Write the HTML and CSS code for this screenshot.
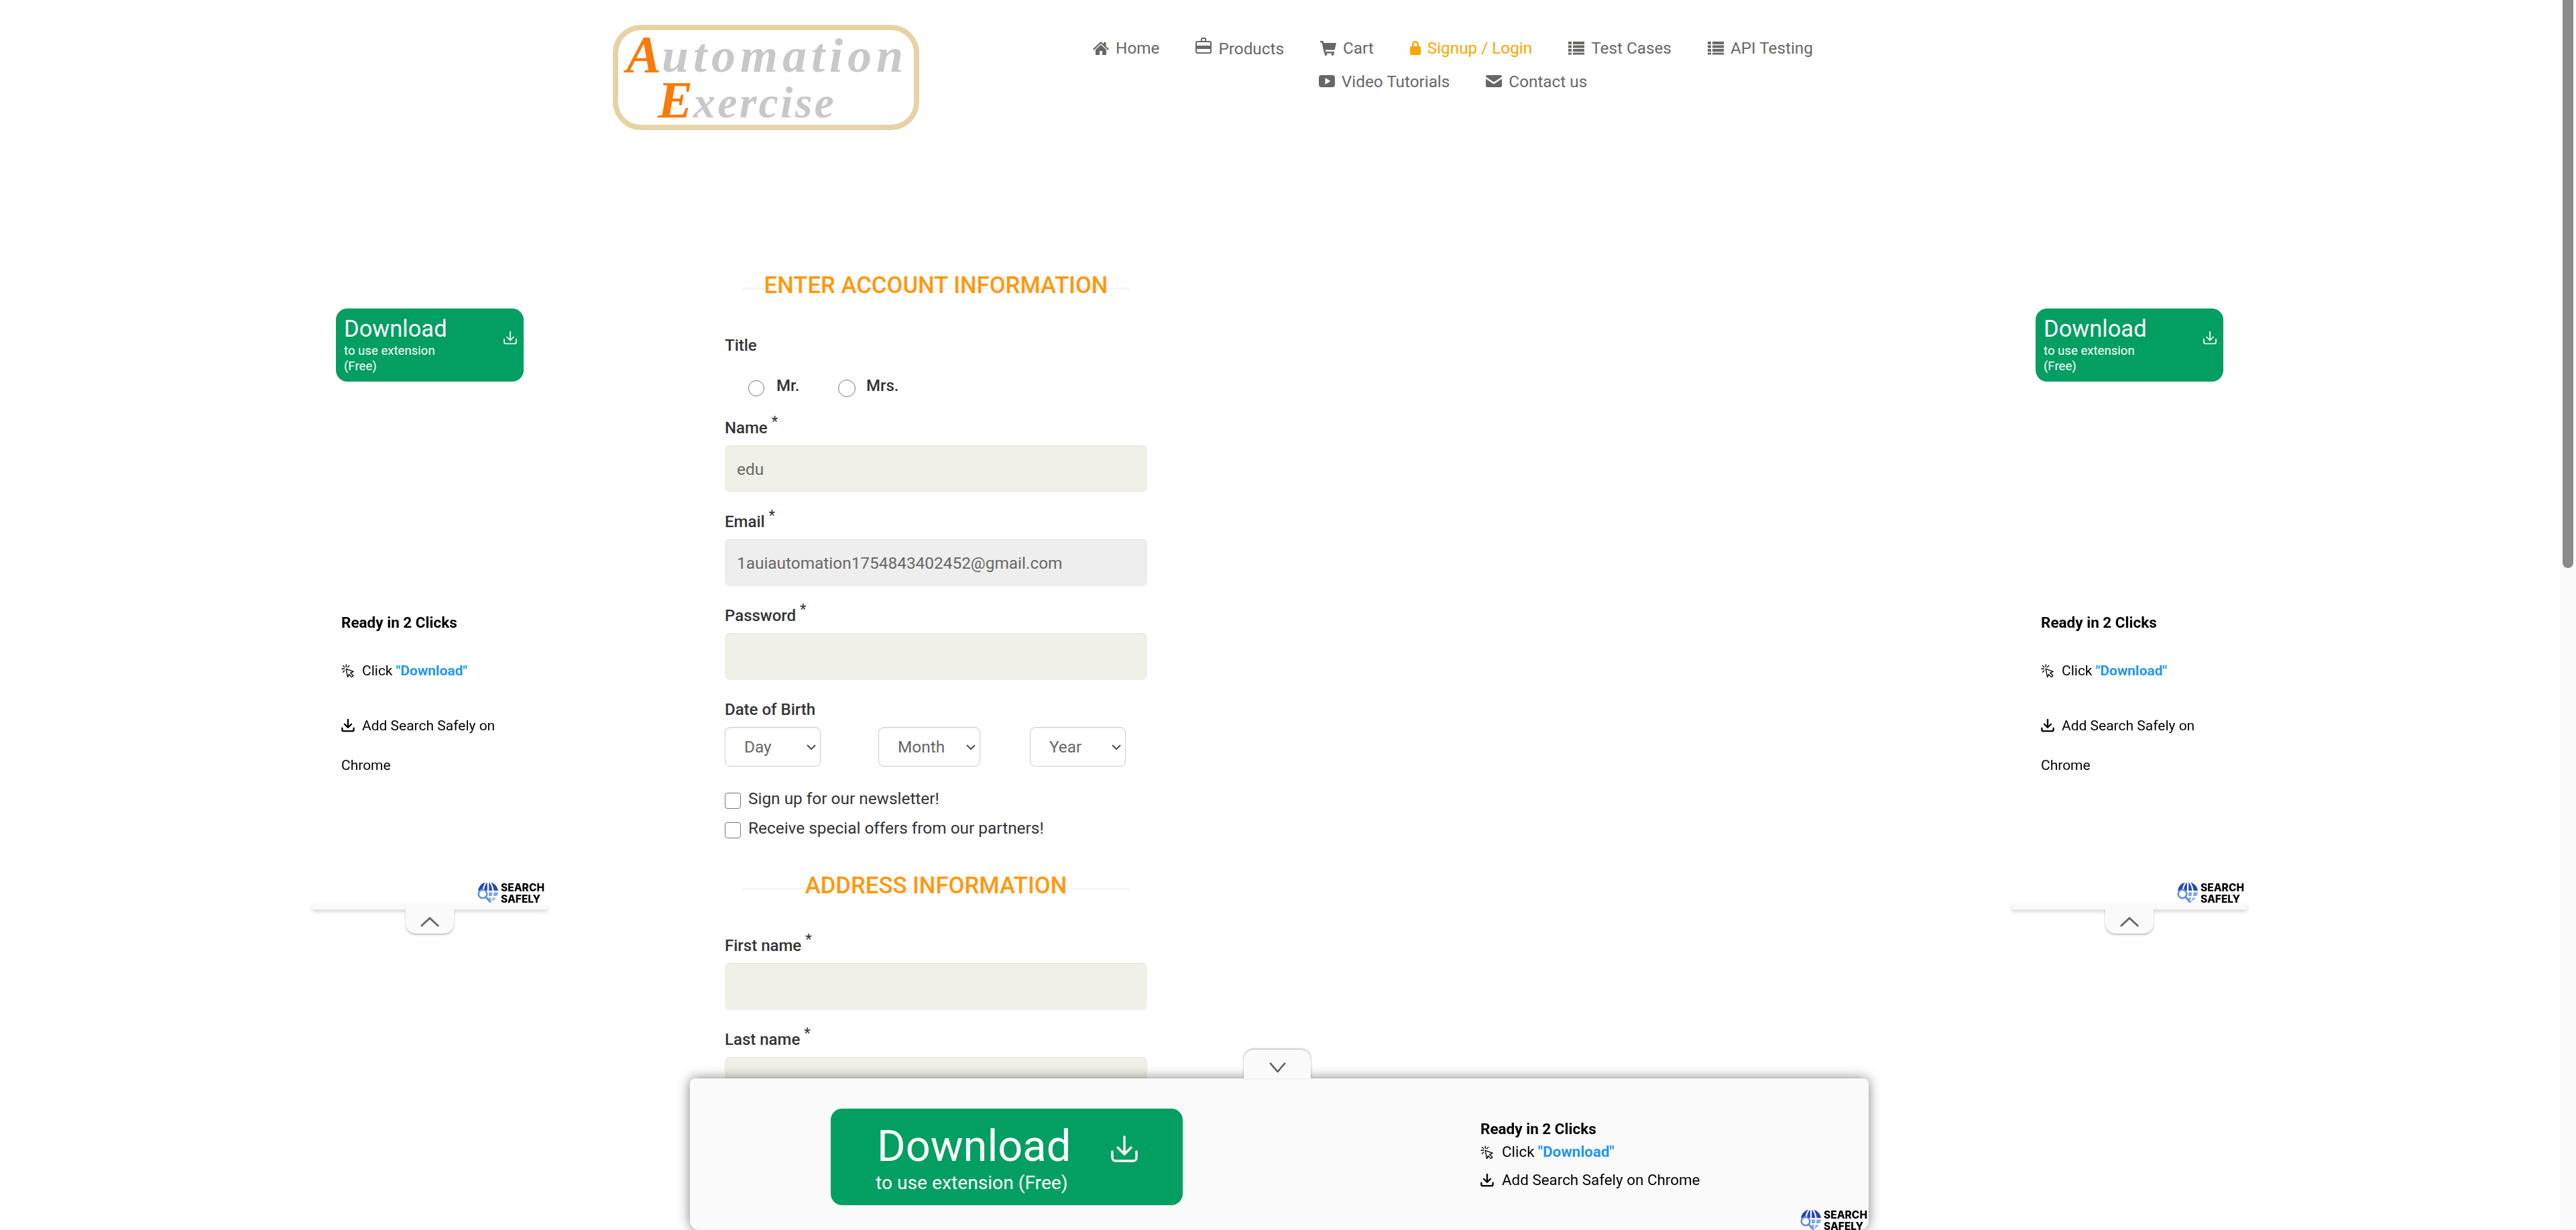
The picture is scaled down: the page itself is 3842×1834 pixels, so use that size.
FILE: index.html
```html
<!DOCTYPE html>
<html lang="en">

<head>
    <meta charset="UTF-8">
    <meta name="viewport" content="width=device-width, initial-scale=1.0">
    <title>Automation Exercise - Signup</title>
    <link rel="stylesheet" href="styles.css">
</head>

<body>
    <svg class="icon-defs" width="0" height="0">
        <symbol id="i-save" viewBox="0 0 40 40">
            <path d="M20 2v25M10 18l10 10 10-10M2 24v9a5 5 0 0 0 5 5h26a5 5 0 0 0 5-5v-9" fill="none" stroke="currentColor" stroke-width="3.4" stroke-linecap="round" stroke-linejoin="round"/>
        </symbol>
        <symbol id="i-click" viewBox="0 0 22 22">
            <path d="M8 8l12 4.6-5 2 4.6 4.6-2.4 2.4-4.6-4.6-2 5z" fill="none" stroke="currentColor" stroke-width="1.5" stroke-linejoin="round"/>
            <path d="M8 1v4M1 8h4M2.6 2.6l2.6 2.6M13 2.6l-2.4 2.6M2.6 13.4l2.6-2.4" fill="none" stroke="currentColor" stroke-width="1.5" stroke-linecap="round"/>
        </symbol>
        <symbol id="i-get" viewBox="0 0 22 22">
            <path d="M11 1v12M5.5 8.5L11 14l5.5-5.500M1.500 15v2.500a2.500 2.500 0 0 0 2.500 2.500h14a2.500 2.500 0 0 0 2.500-2.500V15" fill="none" stroke="currentColor" stroke-width="2.600" stroke-linecap="round" stroke-linejoin="round"/>
        </symbol>
        <symbol id="i-globe" viewBox="0 0 32 31">
            <path d="M1 13C2 7 6 2 12 .7 9.500 4 8 8 7.500 13zM9.800 13c.4-5 2-9.500 5-12.500V13zM17.200 13V.5c3 3 4.600 7.500 5 12.500zM24.500 13c-.5-5-2-9-4.500-12.300C26 2 30 7 31 13z" fill="#2547b5"/>
            <path d="M17 15.500h5.200c0 2-.3 3.700-.6 5.500H17zM24.500 15.500H31c-.3 2-1 3.800-2 5.500h-5.100c.4-1.800.6-3.500.6-5.500zM17 23.500h4c-.7 2.400-2 4.600-4 6.500zM23.300 23.500h4.100c-1.800 2.700-4.400 4.900-7.500 6 1.500-1.700 2.600-3.800 3.400-6z" fill="#7fa3ea"/>
            <circle cx="8" cy="18" r="6.300" fill="#fff" stroke="#5f8fe3" stroke-width="2.600"/>
            <path d="M12.500 22.500L19 29.500" stroke="#5f8fe3" stroke-width="3" stroke-linecap="round"/>
        </symbol>
    </svg>

    <header class="site-header">
        <a class="logo" href="#">
            <span class="logo-line"><b>A</b>utomation</span>
            <span class="logo-line logo-line-2"><b>E</b>xercise</span>
        </a>
        <ul class="nav">
            <li><a href="#"><svg class="nav-icon" viewBox="0 0 24 24"><path d="M12 3L0 14l1.500 1.700L12 6l10.500 9.700L24 14l-4.500-4.100V4h-3.500v2.700zM4 15v8h6v-6h4v6h6v-8l-8-7.300z"/></svg>Home</a></li>
            <li class="nav-products"><a href="#"><svg class="nav-icon nav-icon-bag" viewBox="0 0 24 24"><path fill-rule="evenodd" d="M8 5V2a2 2 0 0 1 2-2h4a2 2 0 0 1 2 2v3h5a3 3 0 0 1 3 3v13a3 3 0 0 1-3 3H3a3 3 0 0 1-3-3V8a3 3 0 0 1 3-3zm2-3v3h4V2zM2 8v4h20V8a1 1 0 0 0-1-1H3a1 1 0 0 0-1 1zm0 9v4a1 1 0 0 0 1 1h18a1 1 0 0 0 1-1v-4z"/></svg>Products</a></li>
            <li><a href="#"><svg class="nav-icon" viewBox="0 0 24 24"><path d="M0 2h4.500l.7 3H24l-2.500 10.500H7.600l.5 2.500H21v2.500H6l-3.500-16H0z"/><circle cx="8.500" cy="22" r="2"/><circle cx="18.500" cy="22" r="2"/></svg>Cart</a></li>
            <li class="active"><a href="#"><svg class="nav-icon nav-icon-lock" viewBox="0 0 16 24"><path fill-rule="evenodd" d="M3 10V7a5 5 0 0 1 10 0v3h1.500A1.500 1.500 0 0 1 16 11.500v10a1.500 1.500 0 0 1-1.500 1.500h-13A1.500 1.500 0 0 1 0 21.500v-10A1.500 1.500 0 0 1 1.500 10zm2.500 0h5V7a2.500 2.500 0 0 0-5 0z"/></svg>Signup / Login</a></li>
            <li><a href="#"><svg class="nav-icon" viewBox="0 0 24 24"><path d="M0 3h5v4H0zM7 3h17v4H7zM0 8.500h5v4H0zM7 8.500h17v4H7zM0 14h5v4H0zM7 14h17v4H7zM0 19.500h5v3H0zM7 19.500h17v3H7z"/></svg>Test Cases</a></li>
            <li><a href="#"><svg class="nav-icon" viewBox="0 0 24 24"><path d="M0 3h5v4H0zM7 3h17v4H7zM0 8.500h5v4H0zM7 8.500h17v4H7zM0 14h5v4H0zM7 14h17v4H7zM0 19.500h5v3H0zM7 19.500h17v3H7z"/></svg>API Testing</a></li>
            <li><a href="#"><svg class="nav-icon" viewBox="0 0 24 24"><path fill-rule="evenodd" d="M4 3h16a4 4 0 0 1 4 4v10a4 4 0 0 1-4 4H4a4 4 0 0 1-4-4V7a4 4 0 0 1 4-4zm5.500 4v10l8-5z"/></svg>Video Tutorials</a></li>
            <li><a href="#"><svg class="nav-icon" viewBox="0 0 24 24"><path d="M2 3h20a2 2 0 0 1 2 2v.6l-12 8-12-8V5a2 2 0 0 1 2-2zM0 8.500l12 8 12-8V19a2 2 0 0 1-2 2H2a2 2 0 0 1-2-2z"/></svg>Contact us</a></li>
        </ul>
    </header>

    <main class="signup-form">
        <h2 class="form-title">ENTER ACCOUNT INFORMATION</h2>

        <div class="field">
            <label class="field-label">Title</label>
            <div class="radio-row">
                <label class="radio"><input type="radio" name="title"><span>Mr.</span></label>
                <label class="radio radio-mrs"><input type="radio" name="title"><span>Mrs.</span></label>
            </div>
        </div>

        <div class="field">
            <label class="field-label">Name <sup>*</sup></label>
            <input class="text-input" type="text" value="edu">
        </div>

        <div class="field">
            <label class="field-label">Email <sup>*</sup></label>
            <input class="text-input" type="text" value="1auiautomation1754843402452@gmail.com" disabled>
        </div>

        <div class="field">
            <label class="field-label">Password <sup>*</sup></label>
            <input class="text-input" type="password">
        </div>

        <div class="field">
            <label class="field-label">Date of Birth</label>
            <div class="dob">
                <div class="select-box day"><select><option>Day</option></select><svg viewBox="0 0 14 10"><path d="M1 2l6 6 6-6"/></svg></div>
                <div class="select-box month"><select><option>Month</option></select><svg viewBox="0 0 14 10"><path d="M1 2l6 6 6-6"/></svg></div>
                <div class="select-box year"><select><option>Year</option></select><svg viewBox="0 0 14 10"><path d="M1 2l6 6 6-6"/></svg></div>
            </div>
        </div>

        <div class="field checks">
            <label class="check"><input type="checkbox"><span>Sign up for our newsletter!</span></label>
            <label class="check"><input type="checkbox"><span>Receive special offers from our partners!</span></label>
        </div>

        <h2 class="form-title address-title">ADDRESS INFORMATION</h2>

        <div class="field">
            <label class="field-label">First name <sup>*</sup></label>
            <input class="text-input" type="text">
        </div>

        <div class="field">
            <label class="field-label">Last name <sup>*</sup></label>
            <input class="text-input" type="text">
        </div>
    </main>

    <!-- side ads float over the page -->
    <aside class="side-ad side-left">
        <a class="side-btn" href="#">
            <span class="side-btn-text">
                <span class="side-btn-big">Download</span>
                <span class="side-btn-small">to use extension<br>(Free)</span>
            </span>
            <svg class="side-btn-icon"><use href="#i-save"/></svg>
        </a>
        <div class="side-steps">
            <p class="steps-head">Ready in 2 Clicks</p>
            <p class="side-step step-click"><svg class="step-icon"><use href="#i-click"/></svg>Click <b>"Download"</b></p>
            <p class="side-step step-add"><svg class="step-icon"><use href="#i-get"/></svg>Add Search Safely on Chrome</p>
        </div>
        <div class="brand side-brand"><svg class="brand-globe"><use href="#i-globe"/></svg><span>SEARCH<br>SAFELY</span></div>
        <div class="side-strip"></div>
        <div class="side-tab"><svg viewBox="0 0 30 16"><path d="M1 15L15 2l14 13"/></svg></div>
    </aside>

    <aside class="side-ad side-right">
        <a class="side-btn" href="#">
            <span class="side-btn-text">
                <span class="side-btn-big">Download</span>
                <span class="side-btn-small">to use extension<br>(Free)</span>
            </span>
            <svg class="side-btn-icon"><use href="#i-save"/></svg>
        </a>
        <div class="side-steps">
            <p class="steps-head">Ready in 2 Clicks</p>
            <p class="side-step step-click"><svg class="step-icon"><use href="#i-click"/></svg>Click <b>"Download"</b></p>
            <p class="side-step step-add"><svg class="step-icon"><use href="#i-get"/></svg>Add Search Safely on Chrome</p>
        </div>
        <div class="brand side-brand"><svg class="brand-globe"><use href="#i-globe"/></svg><span>SEARCH<br>SAFELY</span></div>
        <div class="side-strip"></div>
        <div class="side-tab"><svg viewBox="0 0 30 16"><path d="M1 15L15 2l14 13"/></svg></div>
    </aside>

    <div class="bottom-ad">
        <div class="bottom-tab"><svg viewBox="0 0 26 16"><path d="M1 1l12 14L25 1"/></svg></div>
        <a class="bottom-btn" href="#">
            <span class="bottom-btn-text">
                <span class="bottom-btn-big">Download</span>
                <span class="bottom-btn-small">to use extension (Free)</span>
            </span>
            <svg class="bottom-btn-icon"><use href="#i-save"/></svg>
        </a>
        <div class="bottom-steps">
            <p class="steps-head">Ready in 2 Clicks</p>
            <p class="bottom-step"><svg class="step-icon"><use href="#i-click"/></svg>Click <b>"Download"</b></p>
            <p class="bottom-step"><svg class="step-icon"><use href="#i-get"/></svg>Add Search Safely on Chrome</p>
        </div>
        <div class="brand bottom-brand"><svg class="brand-globe"><use href="#i-globe"/></svg><span>SEARCH<br>SAFELY</span></div>
    </div>

    <div class="scrollbar"><div class="scrollbar-thumb"></div></div>
</body>

</html>
```

FILE: styles.css
```css
html, body {
    height: 100%;
    overflow: hidden;
}

body {
    margin: 0;
    background: #fff;
    color: #333;
    font-family: Roboto, "Liberation Sans", sans-serif;
    font-size: 24px;
}

a {
    text-decoration: none;
}

p {
    margin: 0;
}

.icon-defs {
    position: absolute;
}

/* header */
.site-header {
    display: flex;
    align-items: flex-start;
    padding: 37px 0 0 914px;
    height: 402px;
    box-sizing: border-box;
}

.logo {
    width: 457px;
    height: 157px;
    box-sizing: border-box;
    border: 8px solid #e6d3a5;
    border-radius: 42px;
    padding: 3px 0 0 12px;
    color: #c8c8c8;
    font-family: "Liberation Serif", serif;
    font-style: italic;
    font-weight: bold;
    font-size: 72px;
    letter-spacing: 7px;
    line-height: 66px;
    white-space: nowrap;
}

.logo-line {
    display: block;
}

.logo-line-2 {
    padding-left: 47px;
    font-size: 66px;
    letter-spacing: 3.200px;
}

.logo b {
    color: #f97b0b;
    font-size: 78px;
    letter-spacing: 1px;
}

.nav {
    display: flex;
    flex-wrap: wrap;
    justify-content: center;
    width: 1170px;
    margin: 9px 0 0 211px;
    padding: 0;
    list-style: none;
    column-gap: 54px;
}

.nav a {
    display: flex;
    align-items: center;
    height: 50px;
    color: #696763;
    font-size: 24.300px;
    font-weight: 400;
    white-space: nowrap;
}

.nav-icon {
    width: 24px;
    height: 24px;
    margin-right: 10px;
    fill: #696763;
}

.nav-icon-bag {
    margin-top: -9px;
}

.nav-icon-lock {
    width: 16px;
    margin-right: 10px;
    fill: #ffa500;
}

.nav-products a {
    padding-top: 3px;
    box-sizing: border-box;
}

.nav .active a {
    color: #ffa500;
}

/* form */
.signup-form {
    width: 630px;
    margin-left: 1081px;
}

.form-title {
    margin: 0 0 50px;
    height: 46px;
    color: #fe980f;
    font-size: 34.700px;
    font-weight: 500;
    line-height: 46px;
    text-align: center;
    background: linear-gradient(#f6f6f6, #f6f6f6) center 27px / 578px 3px no-repeat;
}

.address-title {
    margin-top: 39px;
}

.field {
    margin-bottom: 27px;
}

.field-label {
    display: block;
    height: 34px;
    margin-bottom: 9px;
    font-weight: 500;
    line-height: 34px;
}

.field-label sup {
    font-size: 22px;
    font-weight: 400;
    line-height: 0;
    position: relative;
    top: -1px;
}

.radio-row {
    display: flex;
    align-items: flex-start;
    height: 28px;
    padding: 25px 0 0 35px;
}

.radio {
    display: flex;
    align-items: flex-start;
    width: 134px;
    font-weight: 500;
}

.radio span {
    margin-top: -6px;
    line-height: 30px;
}

.radio input,
.check input {
    appearance: none;
    box-sizing: border-box;
    border: 1.500px solid #767676;
    background: #fff;
}

.radio input {
    width: 24px;
    height: 24px;
    margin: 1px 18px 0 0;
    border-radius: 50%;
}

.radio-mrs input {
    width: 26px;
    height: 26px;
    margin: 0 16px 0 0;
}

.text-input {
    display: block;
    width: 100%;
    height: 70px;
    box-sizing: border-box;
    padding: 0 18px;
    border: 0;
    border-radius: 7px;
    background: #f0f0e9;
    color: #696763;
    font-family: inherit;
    font-size: 24.400px;
    font-weight: 400;
    outline: none;
    box-shadow: inset 0 1px 1px rgba(0, 0, 0, 0.05);
}

.text-input:disabled {
    background: #eee;
    opacity: 1;
}

.dob {
    display: grid;
    grid-template-columns: 229px 226px 143px;
}

.select-box {
    position: relative;
    width: 143px;
    height: 59px;
}

.select-box.month {
    width: 152px;
}

.select-box select {
    width: 100%;
    height: 100%;
    box-sizing: border-box;
    padding-left: 28px;
    border: 1px solid #ccc;
    border-radius: 8px;
    background: #fff;
    color: #696763;
    font-family: inherit;
    font-size: 24.400px;
    font-weight: 400;
    appearance: none;
    box-shadow: inset 0 1px 1px rgba(0, 0, 0, 0.07);
}

.select-box svg {
    position: absolute;
    right: 7px;
    top: 25px;
    width: 14px;
    height: 10px;
    fill: none;
    stroke: #444;
    stroke-width: 1.800;
}

.checks {
    margin-top: 20px;
    margin-bottom: 34px;
}

.check {
    display: flex;
    align-items: center;
    height: 44px;
    font-size: 24.400px;
    font-weight: 400;
}

.check input {
    width: 24px;
    height: 24px;
    margin: 4px 11px 0 0;
    border-radius: 4px;
}

.check span {
    margin-top: -4px;
}

/* extension side ads */
.side-ad {
    position: fixed;
    top: 460px;
    width: 350px;
    height: 932px;
    color: #000;
}

.side-left {
    left: 466px;
}

.side-right {
    left: 3001px;
}

.side-btn {
    display: flex;
    justify-content: space-between;
    box-sizing: border-box;
    width: 280px;
    height: 109px;
    margin-left: 35px;
    padding: 10px 10px 0 12px;
    border-radius: 17px;
    background: #029e62;
    color: #fff;
}

.side-btn-big {
    display: block;
    font-size: 34.500px;
    line-height: 40px;
}

.side-btn-small {
    display: block;
    margin-top: 2px;
    font-size: 18.600px;
    line-height: 23px;
}

.side-btn-icon {
    width: 20px;
    height: 21px;
    margin-top: 23px;
}

.side-steps {
    padding: 345px 40px 0 43px;
    font-size: 21px;
}

.steps-head {
    font-size: 22.500px;
    font-weight: 700;
    line-height: 28px;
}

.step-icon {
    width: 20px;
    height: 20px;
    margin-right: 11px;
    vertical-align: -3px;
}

.side-step {
    line-height: 59px;
}

.step-click {
    margin-top: 29px;
}

.step-add {
    margin-top: 23px;
}

.side-step b,
.bottom-step b {
    color: #2196f3;
    font-weight: 700;
}

.brand {
    position: absolute;
    display: flex;
    align-items: flex-start;
    color: #000;
    font-family: Inter, Roboto, sans-serif;
    font-size: 15.500px;
    font-weight: 800;
    line-height: 17px;
}

.brand-globe {
    width: 32px;
    height: 31px;
    margin-right: 3px;
}

.side-brand {
    left: 246px;
    top: 855px;
}

.side-strip {
    position: absolute;
    left: 0;
    top: 888px;
    width: 350px;
    height: 8px;
    background: #fafafa;
    box-shadow: 0 3px 6px rgba(0, 0, 0, 0.18);
}

.side-tab {
    position: absolute;
    left: 139px;
    top: 896px;
    width: 72px;
    height: 36px;
    background: #fafafa;
    border-radius: 0 0 15px 15px;
    box-shadow: 0 2px 3px rgba(0, 0, 0, 0.25);
    text-align: center;
}

.side-tab svg {
    width: 28px;
    height: 15px;
    margin-top: 11px;
    fill: none;
    stroke: #666;
    stroke-width: 3;
}

/* extension bottom bar */
.bottom-ad {
    position: fixed;
    left: 1029px;
    top: 1608px;
    display: flex;
    box-sizing: border-box;
    width: 1758px;
    height: 226px;
    padding: 45px 0 0 210px;
    background: #fafafa;
    border-radius: 8px 8px 14px 14px;
    box-shadow: 0 0 18px rgba(0, 0, 0, 0.5);
    color: #000;
}

.bottom-tab {
    position: absolute;
    left: 826px;
    top: -43px;
    width: 100px;
    height: 43px;
    background: #fafafa;
    border-radius: 15px 15px 0 0;
    box-shadow: 0 -1px 3px rgba(0, 0, 0, 0.35);
    text-align: center;
}

.bottom-tab svg {
    width: 25px;
    height: 15px;
    margin-top: 19px;
    fill: none;
    stroke: #666;
    stroke-width: 3;
}

.bottom-btn {
    display: flex;
    box-sizing: border-box;
    width: 525px;
    height: 144px;
    padding: 18px 0 0 67px;
    border-radius: 17px;
    background: #029e62;
    color: #fff;
}

.bottom-btn-big {
    display: block;
    font-size: 65px;
    font-weight: 400;
    line-height: 76px;
    padding-left: 2px;
}

.bottom-btn-small {
    display: block;
    font-size: 28.200px;
    line-height: 34px;
}

.bottom-btn-icon {
    width: 40px;
    height: 40px;
    margin: 22px 0 0 60px;
}

.bottom-steps {
    margin-left: 444px;
    padding-top: 16px;
    font-size: 22.400px;
}

.bottom-step {
    margin-top: 2px;
    line-height: 36px;
}

.bottom-step .step-icon {
    margin-right: 12px;
}

.bottom-step + .bottom-step {
    margin-top: 6px;
}

.bottom-brand {
    right: 2px;
    top: 195px;
}

.scrollbar {
    position: fixed;
    right: 0;
    top: 0;
    width: 24px;
    height: 100%;
    background: #fafafa;
}

.scrollbar-thumb {
    width: 16px;
    height: 847px;
    margin-left: 4px;
    background: #8a8a8a;
    border-radius: 0 0 8px 8px;
}
```
